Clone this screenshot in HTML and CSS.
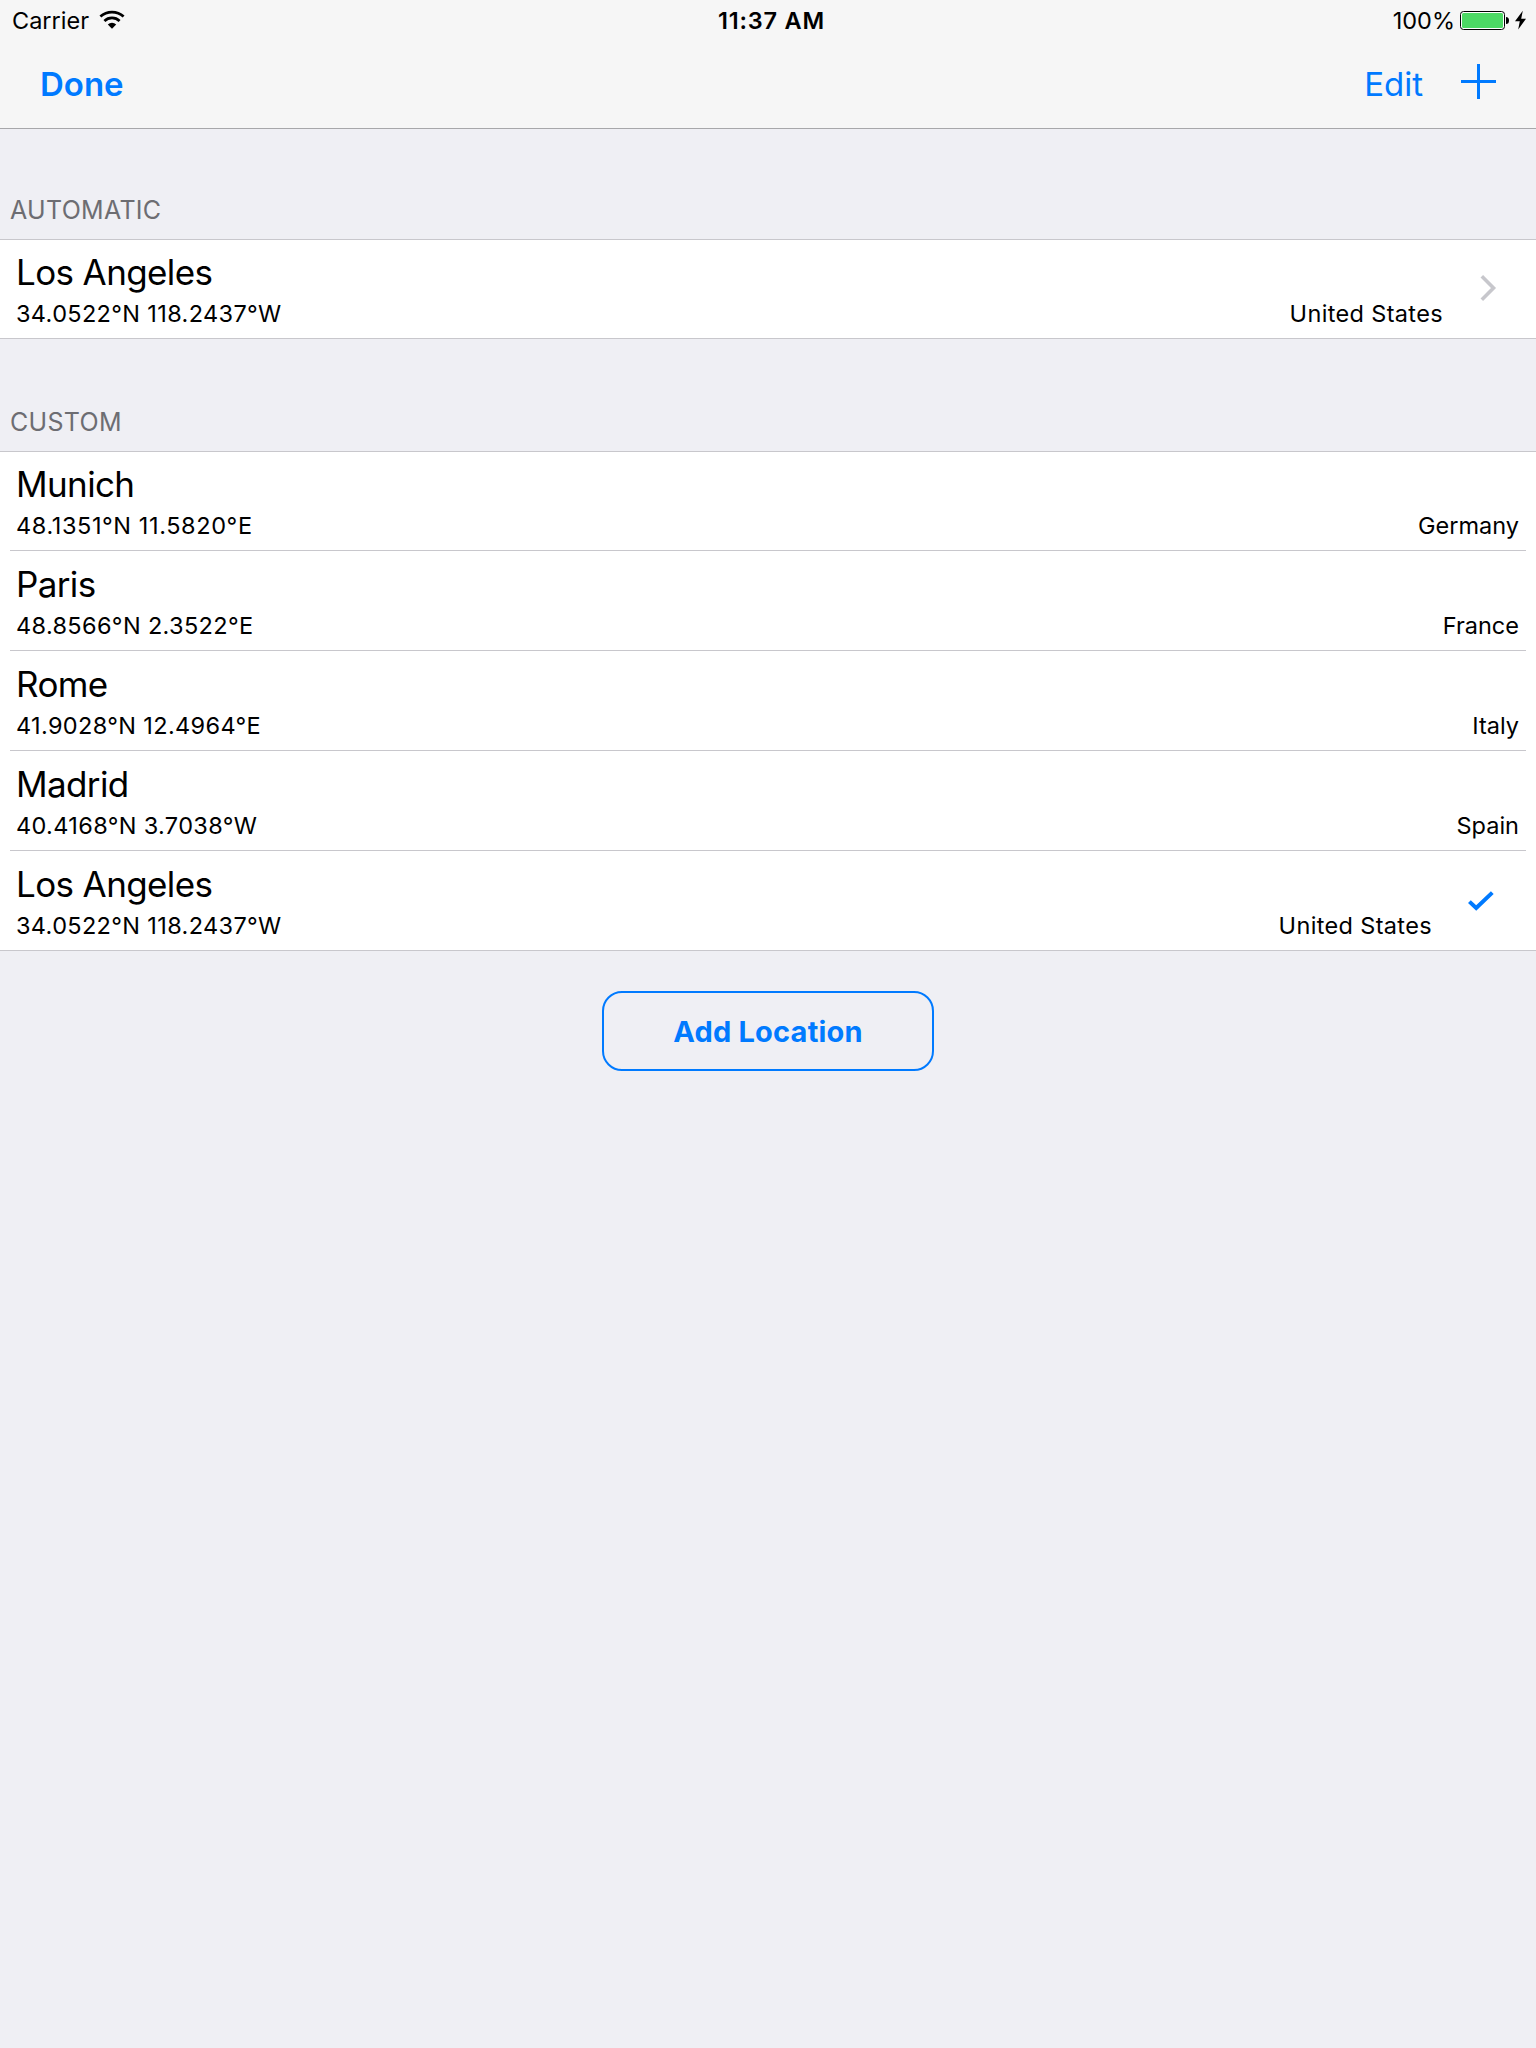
FILE: index.html
```html
<!DOCTYPE html>
<html lang="en">
<head>
  <meta charset="UTF-8" />
  <meta name="viewport" content="width=device-width, initial-scale=1.0"/>
  <title>Locations</title>
  <link rel="stylesheet" href="styles.css">
</head>
<body>

  <header>
    <!-- Status bar -->
    <div class="status-bar">
      <div class="status-left">
        <span class="carrier">Carrier</span>
        <svg class="wifi" width="26" height="20" viewBox="0 0 26 20">
          <path d="M1.4 6.6 A17 17 0 0 1 24.6 6.6" fill="none" stroke="#000" stroke-width="2.7"/>
          <path d="M5.4 11 A11 11 0 0 1 20.6 11" fill="none" stroke="#000" stroke-width="2.7"/>
          <path d="M8.8 14.4 A6 6 0 0 1 17.2 14.4 L13 18.8 Z" fill="#000"/>
        </svg>
      </div>
      <span class="time">11:37 AM</span>
      <div class="status-right">
        <span class="percent">100%</span>
        <svg class="battery" width="50" height="20" viewBox="0 0 50 20">
          <rect x="0.5" y="1.5" width="44" height="18" rx="3" fill="#fff" stroke="#000"/>
          <rect x="2" y="3" width="41" height="15" rx="1.5" fill="#4cd964"/>
          <path d="M46 7 Q49 7 49 10.5 Q49 14 46 14 Z" fill="#000"/>
        </svg>
        <svg class="bolt" width="12" height="20" viewBox="0 0 12 20">
          <path d="M7.8 0.8 L0 11.2 H4.8 L3.2 19.5 L11 8.8 H6.2 Z" fill="#000"/>
        </svg>
      </div>
    </div>

    <nav>
      <a class="done">Done</a>
      <a class="edit">Edit</a>
      <svg class="plus" width="35" height="35" viewBox="0 0 35 35">
        <path d="M16 0 H19 V16 H35 V19 H19 V35 H16 V19 H0 V16 H16 Z" fill="#007aff"/>
      </svg>
    </nav>
  </header>

  <main>
    <!-- Automatic -->
    <section>
      <h2>AUTOMATIC</h2>
      <ul>
        <li>
          <div class="place">
            <h3>Los Angeles</h3>
            <p>34.0522°N 118.2437°W</p>
          </div>
          <span class="country long">United States</span>
          <svg class="chevron" width="17" height="26" viewBox="0 0 17 26">
            <path d="M1.8 1.3 L13.5 13 L1.8 24.7" fill="none" stroke="#c7c7cc" stroke-width="3.6"/>
          </svg>
        </li>
      </ul>
    </section>

    <!-- Custom -->
    <section>
      <h2>CUSTOM</h2>
      <ul>
        <li>
          <div class="place">
            <h3>Munich</h3>
            <p class="wide">48.1351°N 11.5820°E</p>
          </div>
          <span class="country">Germany</span>
        </li>
        <li>
          <div class="place">
            <h3>Paris</h3>
            <p>48.8566°N 2.3522°E</p>
          </div>
          <span class="country">France</span>
        </li>
        <li>
          <div class="place">
            <h3>Rome</h3>
            <p>41.9028°N 12.4964°E</p>
          </div>
          <span class="country">Italy</span>
        </li>
        <li>
          <div class="place">
            <h3>Madrid</h3>
            <p>40.4168°N 3.7038°W</p>
          </div>
          <span class="country">Spain</span>
        </li>
        <li>
          <div class="place">
            <h3>Los Angeles</h3>
            <p>34.0522°N 118.2437°W</p>
          </div>
          <span class="country long">United States</span>
          <svg class="check" width="26" height="20" viewBox="0 0 26 20">
            <path d="M1.4 10.6 L8.2 17 L24.3 1.6" fill="none" stroke="#007aff" stroke-width="4"/>
          </svg>
        </li>
      </ul>
    </section>

    <button>Add Location</button>
  </main>

</body>
</html>
```

FILE: styles.css
```css
* {
  box-sizing: border-box;
  margin: 0;
  padding: 0;
  font-family: Inter, sans-serif;
}

body {
  min-height: 100vh;
  background: #efeff4;
  color: #000;
}

svg {
  display: block;
  flex: none;
}

header {
  height: 129px;
  background: #f6f6f6;
  border-bottom: 1px solid #a7a7aa;
}

/* Status bar */
.status-bar {
  display: grid;
  grid-template-columns: 1fr auto 1fr;
  height: 40px;
  padding: 0 9px 0 12px;
  font-size: 23.5px;
  line-height: 41px;
}

.status-left, .status-right {
  display: flex;
}

.status-right {
  justify-content: flex-end;
}

.wifi {
  margin: 10px 0 0 10px;
}

.time {
  padding-left: 4px;
  font-weight: 600;
  letter-spacing: 0.8px;
}

.battery {
  margin: 10px 5px 0 5px;
}

.bolt {
  margin-top: 10px;
}

/* Navigation bar */
nav {
  display: flex;
  height: 88px;
  padding: 0 40px;
  color: #007aff;
  font-size: 33px;
  line-height: 88px;
}

.done {
  flex: 1;
  font-weight: 600;
}

.plus {
  margin: 24px 0 0 38px;
}

/* Location lists */
h2 {
  height: 110px;
  padding: 64px 0 0 10px;
  color: #6d6d72;
  font-size: 25px;
  font-weight: 400;
  line-height: 34px;
  letter-spacing: 0.3px;
}

section + section h2 {
  height: 112px;
  padding-top: 66px;
}

ul {
  list-style: none;
  background: #fff;
  border-top: 1px solid #c8c7cc;
  border-bottom: 1px solid #c8c7cc;
}

li {
  display: flex;
  height: 100px;
  margin: 0 10px;
  padding: 10px 7px 0 6px;
  border-bottom: 1px solid #c8c7cc;
}

li:first-child {
  height: 99px;
  padding-top: 9px;
}

li:last-child {
  height: 99px;
  border-bottom: none;
}

li:only-child {
  height: 98px;
}

.place {
  flex: 1;
}

h3 {
  font-size: 35px;
  font-weight: 400;
  line-height: 46px;
  letter-spacing: -0.62px;
}

p, .country {
  font-size: 23.5px;
  line-height: 37px;
}

p {
  letter-spacing: 0.35px;
}

p.wide {
  letter-spacing: 0.6px;
}

.country {
  margin-top: 46px;
}

.country.long {
  letter-spacing: 0.35px;
}

.chevron {
  margin: 26px 22px 0 37px;
}

.check {
  margin: 30px 25px 0 36px;
}

button {
  display: block;
  width: 332px;
  height: 80px;
  margin: 40px auto 0;
  background: none;
  border: 2px solid #007aff;
  border-radius: 20px;
  color: #007aff;
  font-size: 29px;
  font-weight: 700;
  letter-spacing: 0.2px;
}
```
